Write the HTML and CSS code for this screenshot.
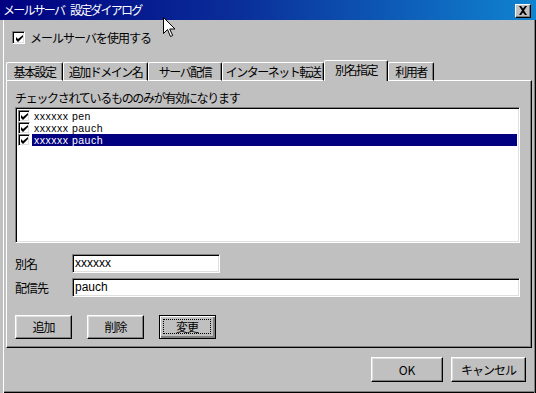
FILE: index.html
```html
<!DOCTYPE html>
<html lang="ja">
<head>
<meta charset="utf-8">
<title>メールサーバ 設定ダイアログ</title>
<link rel="stylesheet" href="styles.css">
</head>
<body>
<div class="window">
  <div class="titlebar">
    <span class="title">メールサーバ 設定ダイアログ</span>
    <span class="close"><svg width="10" height="9" viewBox="0 0 10 9"><path d="M1 0h2l2 2.5L7 0h2L6 4.5 9 9H7L5 6.5 3 9H1l3-4.5z" fill="#000"/></svg></span>
  </div>
  <div class="body">
    <div class="check-row">
      <span class="cb"><svg width="7" height="7" viewBox="0 0 7 7"><path d="M0 2v3l2 2 5-5V-0L2 4z" fill="#000"/></svg></span>
      <span class="jp">メールサーバを使用する</span>
    </div>
    <div class="tabs">
      <div class="tab t1 jp">基本設定</div>
      <div class="tab t2 jp">追加ドメイン名</div>
      <div class="tab t3 jp">サーバ配信</div>
      <div class="tab t4 jp">インターネット転送</div>
      <div class="tab t5 active jp">別名指定</div>
      <div class="tab t6 jp">利用者</div>
    </div>
    <div class="panel">
      <div class="hint jp">チェックされているもののみが有効になります</div>
      <div class="listbox">
        <div class="item">
          <span class="cb small"><svg width="7" height="7" viewBox="0 0 7 7"><path d="M0 2v3l2 2 5-5V-0L2 4z" fill="#000"/></svg></span>
          <span class="item-text">xxxxxx pen</span>
        </div>
        <div class="item">
          <span class="cb small"><svg width="7" height="7" viewBox="0 0 7 7"><path d="M0 2v3l2 2 5-5V-0L2 4z" fill="#000"/></svg></span>
          <span class="item-text">xxxxxx pauch</span>
        </div>
        <div class="item selected">
          <span class="cb small"><svg width="7" height="7" viewBox="0 0 7 7"><path d="M0 2v3l2 2 5-5V-0L2 4z" fill="#000"/></svg></span>
          <span class="item-text">xxxxxx pauch</span>
        </div>
      </div>
      <div class="field first">
        <span class="field-label jp">別名</span>
        <div class="input short">xxxxxx</div>
      </div>
      <div class="field">
        <span class="field-label jp">配信先</span>
        <div class="input long">pauch</div>
      </div>
      <div class="actions">
        <div class="btn jp">追加</div>
        <div class="btn jp">削除</div>
        <div class="btn default jp"><span class="focus">変更</span></div>
      </div>
    </div>
    <div class="footer">
      <div class="btn wide">OK</div>
      <div class="btn wide cancel jp">キャンセル</div>
    </div>
  </div>
  <svg class="cursor" width="13" height="21" viewBox="0 0 13 21"><path d="M0.5 0.5v16l4-4 3 7 2.2-1-3-6.5h5.3z" fill="#fff" stroke="#000" stroke-width="1"/></svg>
</div>
</body>
</html>
```
FILE: styles.css
```css
html, body {
  margin: 0;
  padding: 0;
  background: #c0c0c0;
}
.window {
  position: relative;
  width: 536px;
  height: 393px;
  background: #c0c0c0;
  font-family: "Noto Sans CJK JP", "Liberation Sans", sans-serif;
  font-size: 12px;
  color: #000;
  display: flex;
  flex-direction: column;
  overflow: hidden;
}
.jp {
  letter-spacing: -1px;
}
.titlebar {
  height: 20px;
  flex: none;
  background: linear-gradient(90deg, #000080 0%, #0a2f9a 45%, #1084d0 100%);
  display: flex;
  align-items: center;
  padding: 0 5px 0 3px;
  box-sizing: border-box;
}
.title {
  color: #fff;
  font-size: 12px;
  letter-spacing: -1.8px;
  word-spacing: 5px;
  line-height: 20px;
  flex: 1;
}
.close {
  width: 16px;
  height: 14px;
  box-sizing: border-box;
  background: #c0c0c0;
  border: 1px solid;
  border-color: #fff #000 #000 #fff;
  box-shadow: inset -1px -1px #808080;
  display: flex;
  align-items: center;
  justify-content: center;
  margin-top: 1px;
}
.body {
  flex: 1;
  display: flex;
  flex-direction: column;
  padding: 0 4px 0 6px;
  box-shadow: inset 3px 0 #c0c0c0, inset 4px 0 #fff, inset -1px 0 #000, inset -2px 0 #808080, inset 0 -1px #000, inset 0 -2px #808080;
}
.check-row {
  display: flex;
  align-items: center;
  margin-top: 11px;
  margin-left: 6px;
  height: 13px;
}
.check-row .jp {
  margin-left: 5px;
  line-height: 13px;
}
.cb {
  width: 13px;
  height: 13px;
  box-sizing: border-box;
  background: #fff;
  border: 1px solid;
  border-color: #808080 #fff #fff #808080;
  box-shadow: inset 1px 1px #000, inset -1px -1px #dfdfdf;
  display: flex;
  align-items: center;
  justify-content: center;
  flex: none;
}
.cb svg {
  margin: 1px 0 0 1px;
}
.cb.small {
  width: 12px;
  height: 12px;
}
.tabs {
  display: flex;
  align-items: flex-end;
  margin-top: 16px;
  height: 21px;
  position: relative;
  z-index: 2;
  margin-bottom: -1px;
}
.tab {
  height: 19px;
  box-sizing: border-box;
  border-top: 1px solid #fff;
  border-left: 1px solid #fff;
  border-right: 1px solid #000;
  box-shadow: inset -1px 0 #808080;
  border-radius: 2px 2px 0 0;
  display: flex;
  align-items: center;
  justify-content: center;
  line-height: 16px;
  white-space: nowrap;
  border-bottom: 1px solid #fff;
  letter-spacing: -1.5px;
}
.t1 { width: 57px; }
.t2 { width: 85px; }
.t3 { width: 74px; }
.t4 { width: 102px; }
.t5 { width: 64px; }
.t6 { width: 46px; }
.tab.active {
  height: 21px;
  border-bottom: none;
  background: #c0c0c0;
  padding-bottom: 2px;
}
.panel {
  width: 526px;
  height: 268px;
  box-sizing: border-box;
  border: 1px solid;
  border-color: #fff #000 #000 #fff;
  box-shadow: inset -1px -1px #808080;
  padding: 10px 0 0 8px;
  display: flex;
  flex-direction: column;
}
.hint {
  line-height: 13px;
  height: 13px;
  letter-spacing: -1.3px;
}
.listbox {
  margin-top: 3px;
  width: 505px;
  height: 136px;
  box-sizing: border-box;
  background: #fff;
  border: 1px solid;
  border-color: #808080 #fff #fff #808080;
  box-shadow: inset 1px 1px #000, inset -1px -1px #dfdfdf;
  padding: 2px 2px 0 2px;
}
.item {
  height: 12px;
  display: flex;
  align-items: center;
  font-family: "Liberation Sans", sans-serif;
  font-size: 10.5px;
  letter-spacing: 0.5px;
  line-height: 12px;
}
.item-text {
  margin-left: 2px;
  padding-left: 2px;
  flex: 1;
  height: 12px;
}
.item.selected .item-text {
  background: #000080;
  color: #fff;
}
.field {
  display: flex;
  align-items: center;
  margin-top: 5px;
}
.field.first {
  margin-top: 11px;
}
.field-label {
  width: 57px;
  line-height: 13px;
}
.input {
  height: 19px;
  box-sizing: border-box;
  background: #fff;
  border: 1px solid;
  border-color: #808080 #fff #fff #808080;
  box-shadow: inset 1px 1px #000, inset -1px -1px #dfdfdf;
  font-family: "Liberation Sans", sans-serif;
  font-size: 12px;
  line-height: 17px;
  padding-left: 2px;
}
.input.short { width: 148px; }
.input.long { width: 448px; }
.actions {
  display: flex;
  gap: 15px;
  margin-top: 18px;
}
.btn {
  width: 57px;
  height: 24px;
  box-sizing: border-box;
  border: 1px solid;
  border-color: #fff #000 #000 #fff;
  box-shadow: inset -1px -1px #808080, inset 1px 1px #dfdfdf;
  display: flex;
  align-items: center;
  justify-content: center;
  line-height: 14px;
  background: #c0c0c0;
}
.btn.default {
  border: 1px solid #000;
  box-shadow: inset 1px 1px #fff, inset -1px -1px #808080, inset -2px -2px #808080;
  padding: 3px 4px 4px 3px;
}
.focus {
  flex: 1;
  align-self: stretch;
  border: 1px dotted #000;
  display: flex;
  align-items: center;
  justify-content: center;
}
.footer {
  display: flex;
  justify-content: flex-end;
  gap: 8px;
  margin-top: 9px;
  padding-right: 6px;
}
.btn.wide {
  width: 72px;
  height: 25px;
}
.btn.cancel {
  width: 75px;
}
.cursor {
  position: absolute;
  left: 163px;
  top: 17px;
}
```
